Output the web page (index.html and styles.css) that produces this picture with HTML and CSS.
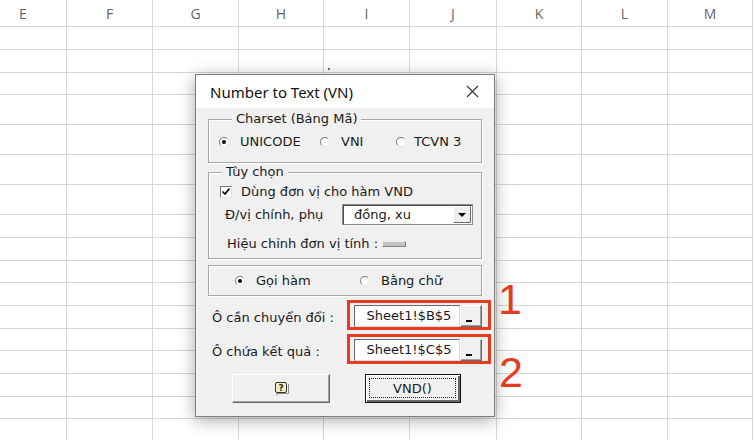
FILE: index.html
```html
<!DOCTYPE html>
<html lang="vi">
<head>
<meta charset="utf-8">
<title>Number to Text (VN)</title>
<link rel="stylesheet" href="styles.css">
</head>
<body>
<div class="sheet">
  <b>E</b><b>F</b><b>G</b><b>H</b><b>I</b><b>J</b><b>K</b><b>L</b><b>M</b>
  <i></i><i></i><i></i><i></i><i></i><i></i><i></i><i></i><i></i>
  <i></i><i></i><i></i><i></i><i></i><i></i><i></i><i></i><i></i>
  <i></i><i></i><i></i><i></i><i></i><i></i><i></i><i></i><i></i>
  <i></i><i></i><i></i><i></i><i></i><i></i><i></i><i></i><i></i>
  <i></i><i></i><i></i><i></i><i></i><i></i><i></i><i></i><i></i>
  <i></i><i></i><i></i><i></i><i></i><i></i><i></i><i></i><i></i>
  <i></i><i></i><i></i><i></i><i></i><i></i><i></i><i></i><i></i>
  <i></i><i></i><i></i><i></i><i></i><i></i><i></i><i></i><i></i>
  <i></i><i></i><i></i><i></i><i></i><i></i><i></i><i></i><i></i>
  <i></i><i></i><i></i><i></i><i></i><i></i><i></i><i></i><i></i>
  <i></i><i></i><i></i><i></i><i></i><i></i><i></i><i></i><i></i>
  <i></i><i></i><i></i><i></i><i></i><i></i><i></i><i></i><i></i>
  <i></i><i></i><i></i><i></i><i></i><i></i><i></i><i></i><i></i>
  <i></i><i></i><i></i><i></i><i></i><i></i><i></i><i></i><i></i>
  <i></i><i></i><i></i><i></i><i></i><i></i><i></i><i></i><i></i>
  <i></i><i></i><i></i><i></i><i></i><i></i><i></i><i></i><i></i>
  <i></i><i></i><i></i><i></i><i></i><i></i><i></i><i></i><i></i>
</div>

<div class="dot"></div>

<div class="dialog">
  <div class="titlebar">
    <span class="title">Number to Text (VN)</span>
    <svg class="close" width="13" height="13" viewBox="0 0 13 13"><path d="M1 1L12 12M12 1L1 12" stroke="#333" stroke-width="1.1" fill="none"/></svg>
  </div>
  <div class="body">
    <div class="group charset">
      <div class="cap">Charset (Bảng Mã)</div>
      <div class="opts">
        <label class="opt"><span class="radio on"></span>UNICODE</label>
        <label class="opt"><span class="radio"></span>VNI</label>
        <label class="opt narrow"><span class="radio"></span>TCVN 3</label>
      </div>
    </div>

    <div class="group options">
      <div class="cap">Tùy chọn</div>
      <label class="checkrow"><span class="check"><svg width="10" height="10" viewBox="0 0 10 10"><path d="M1.5 4.5L4 7L8.5 1.5" stroke="#000" stroke-width="1.6" fill="none"/></svg></span>Dùng đơn vị cho hàm VND</label>
      <div class="comborow">
        <span class="clabel">Đ/vị chính, phụ</span>
        <div class="combo"><span class="cval">đồng, xu</span><span class="drop"><span class="tri"></span></span></div>
      </div>
      <div class="adjrow">Hiệu chỉnh đơn vị tính :<span class="slider"></span></div>
    </div>

    <div class="panel">
      <label class="opt"><span class="radio on"></span>Gọi hàm</label>
      <label class="opt"><span class="radio"></span>Bằng chữ</label>
    </div>

    <div class="row">
      <span class="rlabel">Ô cần chuyển đổi :</span>
      <div class="redbox">
        <span class="ref">Sheet1!$B$5</span><span class="pick"><span class="bar"></span></span>
      </div>
    </div>
    <div class="row">
      <span class="rlabel">Ô chứa kết quả :</span>
      <div class="redbox">
        <span class="ref">Sheet1!$C$5</span><span class="pick"><span class="bar"></span></span>
      </div>
    </div>

    <div class="buttons">
      <div class="btn help">
        <svg width="16" height="15" viewBox="0 0 16 15"><path d="M3 14.5V12.5H14.5V3" stroke="#888" stroke-width="1" fill="none"/><rect x="1.5" y="1.5" width="11" height="10" rx="1.5" fill="#f4efc2" stroke="#333"/><text x="7" y="9.8" font-size="9" font-weight="bold" text-anchor="middle" font-family="DejaVu Sans, sans-serif" fill="#222">?</text></svg>
      </div>
      <div class="btn def"><span class="focus">VND()</span></div>
    </div>
  </div>
</div>

<div class="mark m1">1</div>
<div class="mark m2">2</div>
</body>
</html>
```

FILE: styles.css
```css
html, body {
  margin: 0;
  padding: 0;
  background: #fff;
  overflow: hidden;
}
body {
  width: 754px;
  height: 440px;
  position: relative;
}

/* spreadsheet grid */
.sheet {
  display: grid;
  margin-left: -20px;
  grid-template-columns: 87px 86px 86px 85px 86px 87px 85px 86px 85px;
  grid-template-rows: 27px 23px 23px 22px 30px 30px 30px 30px 23px 23px 22px 23px 23px 22px 23px 23px 22px 23px;
}
.sheet b, .sheet i {
  box-sizing: border-box;
  border-right: 1px solid #d6d6d6;
  border-bottom: 1px solid #d6d6d6;
}
.sheet b {
  font: 400 14px "Open Sans", "Liberation Sans", sans-serif;
  color: #666;
  text-align: center;
  line-height: 26px;
  padding-top: 1px;
}

.dot {
  position: absolute;
  left: 328px;
  top: 68px;
  width: 2px;
  height: 2px;
  background: #6b6bb0;
}

/* dialog */
.dialog {
  position: absolute;
  left: 195px;
  top: 74px;
  width: 300px;
  height: 343px;
  box-sizing: border-box;
  border: 1px solid #7d7d7d;
  background: #f0f0f0;
  box-shadow: 0 3px 16px rgba(0, 0, 0, 0.35);
  font: 13px "DejaVu Sans", sans-serif;
  color: #1a1a1a;
  display: flex;
  flex-direction: column;
}
.titlebar {
  height: 33px;
  flex: none;
  background: #fff;
  display: flex;
  align-items: center;
  justify-content: space-between;
  padding: 0 15px 0 14px;
}
.title {
  font: 15px "Noto Sans", sans-serif;
  color: #111;
}
.close { display: block; }

.body {
  padding: 0 12px;
}

.group {
  border: 1px solid #a8a8a8;
  box-shadow: inset 1px 1px 0 #fff, 1px 1px 0 #fff;
}
.cap {
  display: table;
  margin: -9px 0 0 13px;
  padding: 0 4px;
  background: #f0f0f0;
  line-height: 16px;
}

.charset {
  margin-top: 11px;
  padding: 0 0 12px 10px;
}
.opts {
  margin-top: 7px;
  display: grid;
  grid-template-columns: 101px 76px auto;
  height: 16px;
  align-items: center;
}
.opt {
  display: flex;
  align-items: center;
  gap: 11px;
  line-height: 16px;
}
.opt.narrow { gap: 8px; }

.radio {
  width: 10px;
  height: 10px;
  box-sizing: border-box;
  border-radius: 50%;
  border: 1px solid;
  border-color: #7a7a7a #e4e4e4 #e4e4e4 #7a7a7a;
  background: #fff;
  display: flex;
  align-items: center;
  justify-content: center;
  flex: none;
}
.radio.on::after {
  content: "";
  width: 4px;
  height: 4px;
  border-radius: 50%;
  background: #000;
}

.options {
  margin-top: 9px;
  padding: 0 0 6px 0;
}
.checkrow {
  margin-top: 4px;
  display: flex;
  align-items: center;
  gap: 9px;
  padding-left: 11px;
  line-height: 16px;
}
.check {
  width: 12px;
  height: 12px;
  box-sizing: border-box;
  border: 1px solid;
  border-color: #7a7a7a #e4e4e4 #e4e4e4 #7a7a7a;
  background: #fff;
  display: flex;
  align-items: center;
  justify-content: center;
}
.check svg { display: block; }

.comborow {
  margin-top: 4px;
  display: flex;
  align-items: center;
  padding-left: 16px;
}
.clabel { width: 117px; }
.combo {
  width: 131px;
  height: 21px;
  box-sizing: border-box;
  border: 1px solid #8a8a8a;
  box-shadow: inset 1px 1px 0 #505050;
  background: #fff;
  display: flex;
  align-items: center;
  padding: 1px 1px 1px 11px;
}
.cval { flex: 1; }
.drop {
  width: 18px;
  height: 17px;
  box-sizing: border-box;
  background: #f0f0f0;
  border: 1px solid;
  border-color: #fff #6a6a6a #6a6a6a #fff;
  display: flex;
  align-items: center;
  justify-content: center;
}
.tri {
  width: 0;
  height: 0;
  border-left: 4px solid transparent;
  border-right: 4px solid transparent;
  border-top: 4px solid #000;
}

.adjrow {
  margin-top: 11px;
  padding-left: 18px;
  line-height: 16px;
  display: flex;
  align-items: center;
}
.slider {
  margin-left: 4px;
  width: 24px;
  height: 6px;
  box-sizing: border-box;
  background: #c4c4c4;
  border: 1px solid;
  border-color: #ececec #808080 #808080 #ececec;
}

.panel {
  margin-top: 6px;
  height: 31px;
  box-sizing: border-box;
  border: 1px solid #a8a8a8;
  box-shadow: inset 1px 1px 0 #fff, 1px 1px 0 #fff;
  display: grid;
  grid-template-columns: 125px auto;
  align-items: center;
  padding-left: 26px;
}

.row {
  margin-top: 4px;
  margin-right: -9px;
  display: flex;
  align-items: center;
}
.rlabel {
  flex: 1;
  padding: 4px 0 0 4px;
}
.redbox {
  width: 144px;
  height: 30px;
  box-sizing: border-box;
  border: 3px solid #e63c1e;
  padding: 2px 6px 0 4px;
  display: flex;
  align-items: flex-start;
}
.ref {
  width: 106px;
  height: 22px;
  box-sizing: border-box;
  background: #fff;
  border: 1px solid;
  border-color: #6a6a6a #d8d8d8 #d8d8d8 #6a6a6a;
  text-align: center;
  line-height: 20px;
  padding-left: 4px;
}
.pick {
  width: 22px;
  height: 22px;
  box-sizing: border-box;
  background: #f0f0f0;
  border: 1px solid;
  border-color: #fff #6a6a6a #6a6a6a #fff;
  box-shadow: inset -1px -1px 0 #a0a0a0;
  display: flex;
  align-items: flex-end;
  justify-content: center;
  padding: 0 4px 4px 0;
}
.bar {
  width: 6px;
  height: 2px;
  background: #000;
}

.buttons {
  margin-top: 10px;
  display: flex;
  gap: 35px;
  padding-left: 24px;
}
.btn {
  height: 29px;
  box-sizing: border-box;
  background: #f0f0f0;
  border: 1px solid;
  border-color: #fff #6a6a6a #6a6a6a #fff;
  box-shadow: inset -1px -1px 0 #a0a0a0;
  display: flex;
  align-items: center;
  justify-content: center;
}
.btn.help { width: 98px; }
.btn.help svg { display: block; margin-left: 2px; }
.btn.def {
  width: 96px;
  border: 1px solid #111;
  box-shadow: inset 1px 1px 0 #fff, inset -2px -2px 0 #6a6a6a;
  padding: 3px 4px 4px 3px;
  align-items: stretch;
}
.focus {
  flex: 1;
  border: 1px dotted #222;
  display: flex;
  align-items: center;
  justify-content: center;
}

/* annotations */
.mark {
  position: absolute;
  font: 43px/43px "Liberation Sans", Arial, sans-serif;
  color: #e63c1e;
}
.m1 { left: 498px; top: 278px; }
.m2 { left: 499px; top: 351px; }
```
